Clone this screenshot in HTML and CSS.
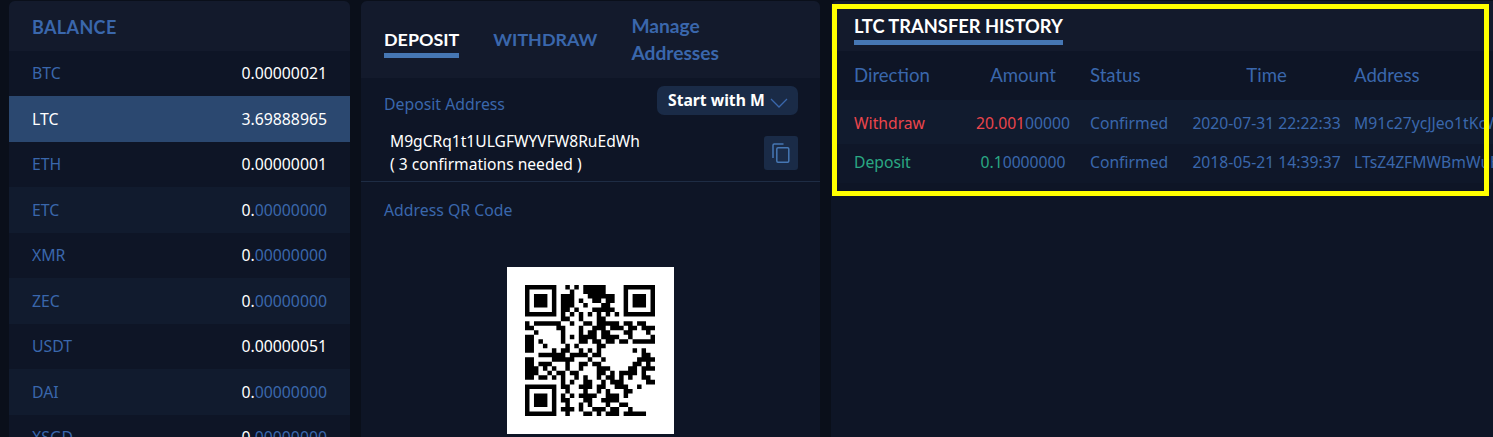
FILE: index.html
```html
<!DOCTYPE html>
<html lang="en">
<head>
<meta charset="utf-8">
<title>LTC Transfer History</title>
<link rel="stylesheet" href="styles.css">
</head>
<body>
<main class="page">
  <section class="panel balance">
    <h2 class="balance-title">BALANCE</h2>
    <ul class="coins">
      <li class="coin"><span>BTC</span><span class="val">0.00000021</span></li>
      <li class="coin active"><span>LTC</span><span class="val">3.69888965</span></li>
      <li class="coin"><span>ETH</span><span class="val">0.00000001</span></li>
      <li class="coin"><span>ETC</span><span class="val">0.<i>00000000</i></span></li>
      <li class="coin"><span>XMR</span><span class="val">0.<i>00000000</i></span></li>
      <li class="coin"><span>ZEC</span><span class="val">0.<i>00000000</i></span></li>
      <li class="coin"><span>USDT</span><span class="val">0.00000051</span></li>
      <li class="coin"><span>DAI</span><span class="val">0.<i>00000000</i></span></li>
      <li class="coin"><span>XSGD</span><span class="val">0.<i>00000000</i></span></li>
    </ul>
  </section>

  <section class="panel deposit">
    <nav class="tabs">
      <a class="tab current">DEPOSIT</a>
      <a class="tab">WITHDRAW</a>
      <a class="tab manage">Manage Addresses</a>
    </nav>
    <div class="addr-head">
      <span class="label addr-label">Deposit Address</span>
      <button class="select"><span class="select-text">Start with M</span>
        <svg class="chev" width="18" height="10" viewBox="0 0 18 10"><path d="M1 1l8 8 8-8" fill="none" stroke="#3a67ac" stroke-width="1.3"/></svg>
      </button>
    </div>
    <div class="addr-row">
      <p class="addr">M9gCRq1t1ULGFWYVFW8RuEdWh<br>( 3 confirmations needed )</p>
      <button class="copy" aria-label="Copy">
        <svg width="18" height="20" viewBox="0 0 18 20"><path d="M11.5 1H2.2Q1 1 1 2.2V15" fill="none" stroke="#4677b4" stroke-width="1.5"/><rect x="4.8" y="4.8" width="12" height="14.4" rx="1.2" fill="none" stroke="#4677b4" stroke-width="1.5"/></svg>
      </button>
    </div>
    <div class="qr-block">
      <span class="label">Address QR Code</span>
      <div class="qr">
        <svg class="qr-svg" viewBox="0 0 29 29" preserveAspectRatio="none">
          <path fill-rule="evenodd" d="M0 0h7v7h-7zM1 1v5h5v-5zM2 2h3v3h-3zM22 0h7v7h-7zM23 1v5h5v-5zM24 2h3v3h-3zM0 22h7v7h-7zM1 23v5h5v-5zM2 24h3v3h-3z"/>
          <path fill="none" stroke="#000" stroke-width="1" d="M9 .5h1M11 .5h1M13 .5h5M10 1.5h1M13 1.5h5M8 2.5h3M14 2.5h6M8 3.5h3M12 3.5h1M15 3.5h2M18 3.5h2M8 4.5h3M13 4.5h1M17 4.5h2M8 5.5h2M11 5.5h1M15 5.5h5M8 6.5h1M10 6.5h1M12 6.5h1M14 6.5h1M16 6.5h1M18 6.5h1M20 6.5h1M8 7.5h2M12 7.5h1M16 7.5h2M0 8.5h1M2 8.5h6M10 8.5h1M13 8.5h2M16 8.5h5M22 8.5h2M25 8.5h2M0 9.5h2M7 9.5h2M12 9.5h1M15 9.5h3M19 9.5h3M23 9.5h2M26 9.5h3M2 10.5h1M8 10.5h1M12 10.5h1M14 10.5h2M17 10.5h2M22 10.5h2M27 10.5h1M0 11.5h2M8 11.5h1M10 11.5h1M12 11.5h4M17 11.5h4M23 11.5h1M28 11.5h1M0 12.5h2M3 12.5h1M8 12.5h1M12 12.5h2M15 12.5h2M18 12.5h2M21 12.5h2M24 12.5h5M0 13.5h2M4 13.5h1M9 13.5h1M11 13.5h1M16 13.5h2M0 14.5h2M6 14.5h1M8 14.5h2M12 14.5h1M14 14.5h1M16 14.5h1M24 14.5h1M26 14.5h1M3 15.5h3M6 15.5h2M8 15.5h1M10 15.5h4M15 15.5h2M26 15.5h2M0 16.5h2M6 16.5h2M8 16.5h3M14 16.5h1M17 16.5h1M25 16.5h4M0 17.5h2M3 17.5h3M9 17.5h1M12 17.5h2M15 17.5h2M24 17.5h2M27 17.5h1M0 18.5h2M2 18.5h1M4 18.5h1M6 18.5h1M9 18.5h1M12 18.5h1M16 18.5h3M23 18.5h2M26 18.5h3M0 19.5h2M2 19.5h1M5 19.5h1M7 19.5h2M10 19.5h2M16 19.5h2M19 19.5h1M21 19.5h4M26 19.5h1M0 20.5h2M3 20.5h2M6 20.5h1M8 20.5h1M11 20.5h1M13 20.5h1M16 20.5h1M18 20.5h2M21 20.5h1M23 20.5h1M26 20.5h2M8 21.5h1M10 21.5h1M13 21.5h2M17 21.5h1M19 21.5h3M27 21.5h2M8 22.5h2M12 22.5h3M16 22.5h2M20 22.5h3M25 22.5h1M9 23.5h1M13 23.5h1M16 23.5h1M18 23.5h1M22 23.5h2M8 24.5h1M10 24.5h1M12 24.5h3M15 24.5h1M18 24.5h3M22 24.5h1M8 25.5h2M13 25.5h2M17 25.5h4M9 26.5h1M12 26.5h1M14 26.5h1M18 26.5h1M21 26.5h2M8 27.5h3M12 27.5h1M15 27.5h3M19 27.5h2M23 27.5h1M9 28.5h1M13 28.5h2M16 28.5h1M18 28.5h3M22 28.5h5"/>
        </svg>
      </div>
    </div>
  </section>

  <section class="panel history">
    <header class="hist-head"><h2 class="hist-title">LTC TRANSFER HISTORY</h2></header>
    <div class="grid grid-head">
      <span>Direction</span><span class="center">Amount</span><span>Status</span><span class="center time">Time</span><span>Address</span>
    </div>
    <div class="grid row row-a">
      <span class="out">Withdraw</span><span class="center"><b class="out">20.001</b>00000</span><span>Confirmed</span><span class="center time">2020-07-31 22:22:33</span><span>M91c27ycJJeo1tKcWhpQ4bZnR8sLm</span>
    </div>
    <div class="grid row row-b">
      <span class="in">Deposit</span><span class="center"><b class="in">0.1</b>0000000</span><span>Confirmed</span><span class="center time">2018-05-21 14:39:37</span><span>LTsZ4ZFMWBmWuHk7xPq2vYdN3cTe</span>
    </div>
  </section>
  <div class="highlight"></div>
</main>
</body>
</html>
```
FILE: styles.css
```css
* { box-sizing: border-box; }
html, body { margin: 0; height: 100%; }
body {
  background: #0a0f1a;
  font-family: "Noto Sans", "Open Sans", sans-serif;
  font-size: 15.8px;
  color: #3a67ac;
  overflow: hidden;
}
.page {
  position: relative;
  display: flex;
  gap: 11px;
  height: 437px;
  padding: 1px 0 0 9px;
  overflow: hidden;
}
.panel {
  background: #0e1526;
  border-radius: 6px 6px 0 0;
  overflow: hidden;
}
.balance { flex: 0 0 341px; }
.deposit { flex: 0 0 459px; }
.history { flex: 1 1 0; min-width: 0; border-radius: 6px 0 0 0; }

.balance-title {
  margin: 0;
  height: 49.5px;
  padding: 0 23px;
  background: #131a2c;
  font: 700 18px/52px "Lato", sans-serif;
  letter-spacing: .35px;
  color: #3a67ac;
}
.coins { list-style: none; margin: 0; padding: 0; }
.coin {
  display: flex;
  justify-content: space-between;
  align-items: center;
  height: 45.5px;
  padding: 0 23px;
}
.coin:nth-child(even) { background: #111b2e; }
.coin.active { background: #2b4870; color: #fff; }
.val { color: #fff; }
.val i { font-style: normal; color: #3a67ac; }

.tabs {
  display: flex;
  align-items: center;
  gap: 34px;
  height: 77px;
  padding: 0 23px;
  background: #131a2c;
  font: 700 17.9px/27px "Lato", sans-serif;
}
.tab { color: #3a67ac; padding: 0; }
.tab.current {
  color: #fff;
  border-bottom: 5px solid #4677b4;
  padding-top: 5px;
}
.tab.manage { width: 100px; font-size: 19.2px; margin-top: -1px; }

.addr-head {
  display: flex;
  justify-content: space-between;
  align-items: flex-start;
  padding: 8px 22px 0 23px;
}
.addr-label { margin-top: 7px; }
.select {
  display: flex;
  align-items: center;
  gap: 5px;
  width: 141px;
  height: 29px;
  padding: 0 0 2px 11px;
  border: 0;
  border-radius: 7px;
  background: #1a2b47;
  color: #fff;
  font: 700 15.7px "Noto Sans", sans-serif;
  white-space: nowrap;
}
.chev { margin-top: 7px; }
.addr-row {
  display: flex;
  justify-content: space-between;
  align-items: flex-start;
  height: 67px;
  padding: 15px 22px 0 29px;
  border-bottom: 1px solid #1e2c44;
}
.addr { margin: 0; color: #fff; line-height: 23px; font-size: 15.6px; }
.copy {
  display: flex;
  align-items: center;
  justify-content: center;
  width: 34px;
  height: 34px;
  margin-top: 6px;
  padding: 0;
  border: 0;
  border-radius: 3px;
  background: #1a2b47;
}
.qr-block { padding: 17px 23px 0; }
.label { display: block; line-height: 22px; }
.qr {
  width: 167px;
  height: 167px;
  margin: 46px auto 0;
  padding: 18px 19px 18px 18px;
  background: #fff;
}
.qr-svg { display: block; width: 130px; height: 131px; }

.hist-head { height: 50px; padding: 0 23px; background: #131a2c; }
.hist-title {
  display: inline-block;
  margin: 0;
  height: 44px;
  padding-top: 12px;
  border-bottom: 5px solid #4677b4;
  color: #fff;
  font: 700 18.3px/27px "Lato", sans-serif;
  white-space: nowrap;
}
.grid {
  display: grid;
  grid-template-columns: 122px 114px 102px 162px 1fr;
  align-items: center;
  padding-left: 23px;
  white-space: nowrap;
  overflow: hidden;
  font-size: 15.7px;
}
.grid > :nth-child(2) { padding-right: 20px; }
.grid-head { height: 49px; padding-bottom: 2px; font: 400 18.6px "Lato", sans-serif; }
.row-a { height: 44px; padding-top: 2px; background: #111b2e; }
.row-b { height: 39px; padding-bottom: 4px; background: #0f1729; }
.center { text-align: center; }
.time { padding-right: 13px; }
.out { color: #eb454c; font-weight: 400; }
.in { color: #2aa883; font-weight: 400; }

.highlight {
  position: absolute;
  left: 832px;
  top: 4px;
  width: 657px;
  height: 192px;
  border: 5px solid #ffff00;
  pointer-events: none;
}
```
